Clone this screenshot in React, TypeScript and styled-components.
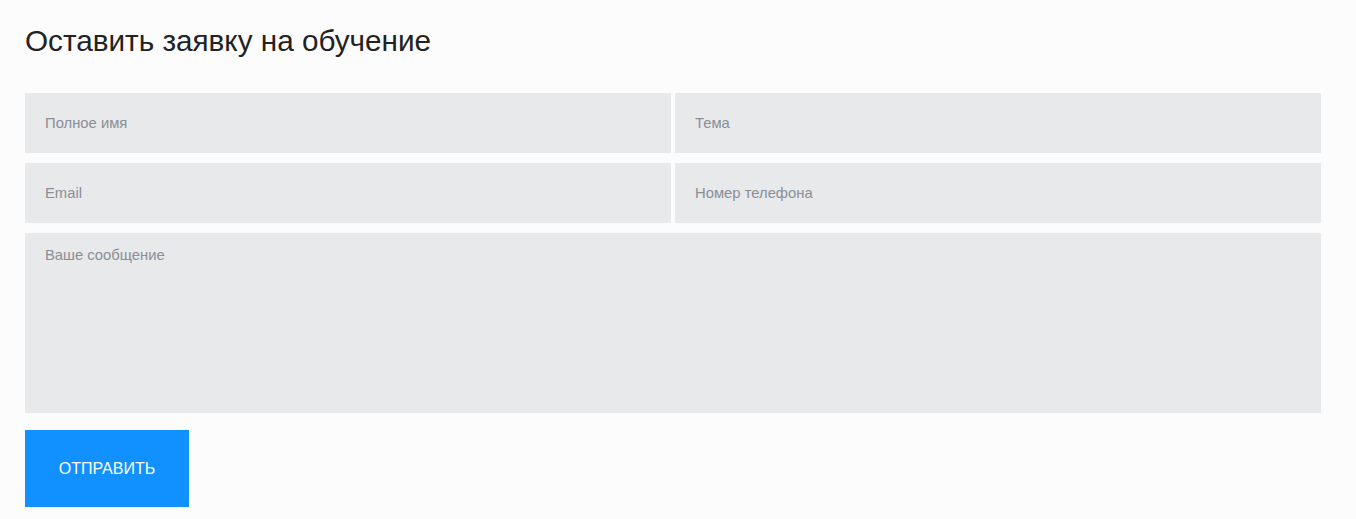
import styled, { createGlobalStyle } from 'styled-components';

const GlobalStyle = createGlobalStyle`
  html, body {
    margin: 0;
    padding: 0;
    background-color: #fcfcfc;
    font-family: 'Liberation Sans', Arial, sans-serif;
  }
`;

const Section = styled.section`
  padding: 22px 35px 12px 25px;
`;

const Title = styled.h2`
  margin: 0 0 33px;
  font-size: 29.7px;
  font-weight: 400;
  line-height: 38px;
  color: #222222;
`;

const Form = styled.form`
  display: grid;
  grid-template-columns: 1fr 1fr;
  column-gap: 4px;
  row-gap: 10px;
`;

const Field = styled.input`
  height: 60px;
  box-sizing: border-box;
  border: none;
  outline: none;
  background-color: #e8e9eb;
  padding: 0 20px 1px;
  font-family: 'Liberation Sans', Arial, sans-serif;
  font-size: 14.8px;
  color: #333;

  &::placeholder {
    color: #8a8f96;
  }
`;

const Message = styled.textarea`
  grid-column: 1 / -1;
  height: 180px;
  box-sizing: border-box;
  border: none;
  outline: none;
  resize: none;
  background-color: #e8e9eb;
  padding: 12px 20px;
  font-family: 'Liberation Sans', Arial, sans-serif;
  font-size: 14.8px;
  line-height: 20px;
  color: #333;

  &::placeholder {
    color: #8a8f96;
  }
`;

const SubmitButton = styled.button`
  justify-self: start;
  margin-top: 7px;
  width: 164px;
  height: 77px;
  border: none;
  background-color: #1190ff;
  color: #ffffff;
  font-family: 'Liberation Sans', Arial, sans-serif;
  font-size: 16px;
  text-transform: uppercase;
  cursor: pointer;
`;

function App() {
  return (
    <>
      <GlobalStyle />
      <Section>
        <Title>Оставить заявку на обучение</Title>
        <Form onSubmit={(e) => e.preventDefault()}>
          <Field type="text" placeholder="Полное имя" />
          <Field type="text" placeholder="Тема" />
          <Field type="email" placeholder="Email" />
          <Field type="tel" placeholder="Номер телефона" />
          <Message placeholder="Ваше сообщение" />
          <SubmitButton type="submit">Отправить</SubmitButton>
        </Form>
      </Section>
    </>
  );
}

export default App;
